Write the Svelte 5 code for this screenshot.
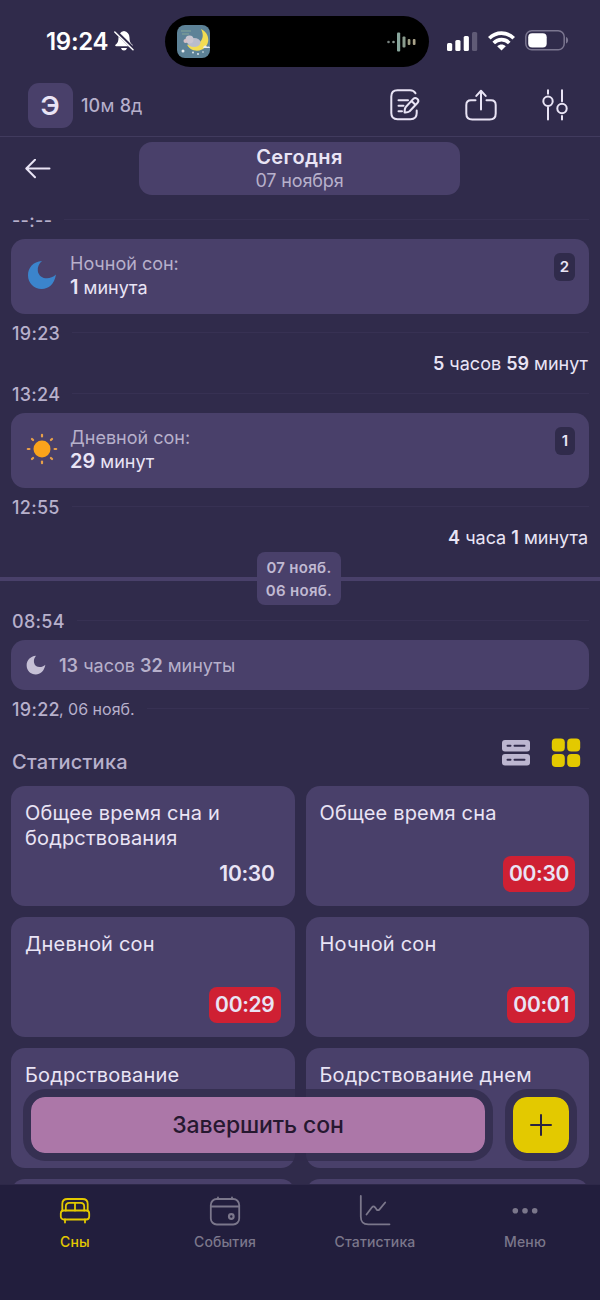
<script lang="ts">
	type Part = { text: string; bold?: boolean };

	const nightSleep: Part[] = [{ text: "1", bold: true }, { text: " минута" }];
	const daySleep: Part[] = [{ text: "29", bold: true }, { text: " минут" }];
	const firstGap: Part[] = [
		{ text: "5", bold: true },
		{ text: " часов " },
		{ text: "59", bold: true },
		{ text: " минут" }
	];
	const secondGap: Part[] = [
		{ text: "4", bold: true },
		{ text: " часа " },
		{ text: "1", bold: true },
		{ text: " минута" }
	];
	const previousNight: Part[] = [
		{ text: "13", bold: true },
		{ text: " часов " },
		{ text: "32", bold: true },
		{ text: " минуты" }
	];

	const stats = [
		{ title: "Общее время сна и бодрствования", value: "10:30", alert: false },
		{ title: "Общее время сна", value: "00:30", alert: true },
		{ title: "Дневной сон", value: "00:29", alert: true },
		{ title: "Ночной сон", value: "00:01", alert: true },
		{ title: "Бодрствование", value: "", alert: false },
		{ title: "Бодрствование днем", value: "", alert: false },
		{ title: "", value: "", alert: false },
		{ title: "", value: "", alert: false }
	];

	const tabs = [
		{ id: "sleep", label: "Сны" },
		{ id: "events", label: "События" },
		{ id: "stats", label: "Статистика" },
		{ id: "menu", label: "Меню" }
	];

	let activeTab = $state("sleep");
</script>

{#snippet duration(parts: Part[])}
	{#each parts as part}{#if part.bold}<b>{part.text}</b>{:else}<span>{part.text}</span>{/if}{/each}
{/snippet}

{#snippet timeRow(time: string, note: string = "")}
	<div class="time-row">
		<span class="time">{time}</span>
		{#if note}<span class="note">{note}</span>{/if}
		<span class="rule"></span>
	</div>
{/snippet}

<div class="screen">
	<div class="status">
		<div class="clock">
			<span>19:24</span>
			<svg width="20" height="22" viewBox="0 0 20 22">
				<path
					d="M10 1C6.600 1.600 4.600 4 4.500 7.500c0 4-.8 5.600-3 7.300-.6.7-.2 1.500.6 1.500h15.800c.8 0 1.200-.8.6-1.500-2.200-1.700-3-3.300-3-7.300C15.400 4 13.400 1.600 10 1z"
					fill="#fff"
				/>
				<path d="M7 18h6c-.5 1.700-1.600 2.500-3 2.500S7.500 19.700 7 18z" fill="#fff" />
				<path d="M1.500 1.300 20 19.400" stroke="#302b4b" stroke-width="3.400" />
				<path d="M.8 2 19 19.800" stroke="#fff" stroke-width="1.500" stroke-linecap="round" />
			</svg>
		</div>
		<div class="island">
			<svg class="app-thumb" width="33" height="33" viewBox="0 0 33 33">
				<rect width="33" height="33" rx="8" fill="#5d8297" />
				<path d="M4 6h10M5 9h7" stroke="#83a697" stroke-width="1.200" />
				<path d="M24 4c9 4 10 16 1 20.500-6 3-13 0-15-5 7 3 14-1 15.500-7 .7-3-.2-6-1.500-8.500z" fill="#f2dc52" />
				<ellipse cx="17" cy="17.500" rx="6.500" ry="4.500" fill="#b9bccb" />
				<circle cx="12.500" cy="14.500" r="4" fill="#c9c5d0" />
				<circle cx="8.500" cy="16" r="2" fill="#d6bfc5" />
				<path d="M26 23c1-3 3-3 4-1 1.500-1 3 0 3 1z" fill="#e6ebf0" />
				<g fill="#e8eef2">
					<circle cx="6" cy="26" r="1.500" />
					<circle cx="16" cy="27.500" r=".9" />
					<circle cx="21" cy="29" r=".9" />
					<circle cx="26" cy="27" r=".8" />
				</g>
			</svg>
			<svg width="30" height="22" viewBox="0 0 30 22">
				<circle cx="2.500" cy="11" r="1.300" fill="#77827f" />
				<circle cx="7.500" cy="11" r="1.300" fill="#8b9691" />
				<rect x="11" y="1.500" width="3.200" height="19" rx="1" fill="#88a69c" />
				<rect x="16.500" y="5.500" width="3" height="11" rx="1" fill="#8a9c8e" />
				<rect x="21.700" y="8" width="2.700" height="6" rx="1" fill="#9c9d82" />
				<rect x="26.800" y="8" width="2.700" height="6" rx="1" fill="#aaa38a" />
			</svg>
		</div>
		<div class="signals">
			<svg width="31" height="20" viewBox="0 0 31 20">
				<rect y="12" width="5.200" height="8" rx="1.500" fill="#fff" />
				<rect x="8.300" y="9" width="5.200" height="11" rx="1.500" fill="#fff" />
				<rect x="16.700" y="5" width="5.200" height="15" rx="1.500" fill="#fff" />
				<rect x="25" y="1" width="5.200" height="19" rx="1.500" fill="#605b76" />
			</svg>
			<svg width="27" height="20" viewBox="0 0 27 20">
				<g fill="none" stroke="#fff" stroke-width="3.700">
					<path d="M1.300 7.300c7-6.900 17.400-6.900 24.400 0" />
					<path d="M5.700 12c4.500-4.400 11.100-4.400 15.600 0" />
				</g>
				<path d="M13.500 19.500 9.200 15.300c2.500-2.300 6.100-2.300 8.600 0z" fill="#fff" />
			</svg>
			<svg width="44" height="21" viewBox="0 0 44 21">
				<rect x=".8" y=".8" width="38.400" height="19" rx="6" fill="none" stroke="#7b7690" stroke-width="1.500" />
				<rect x="3.200" y="3.200" width="18.500" height="14.200" rx="4" fill="#fff" />
				<path d="M41 7c2.800 1 2.800 5.600 0 6.600z" fill="#7b7690" />
			</svg>
		</div>
	</div>

	<header>
		<div class="avatar">Э</div>
		<div class="age"><b>10</b>м <b>8</b>д</div>
		<div class="actions">
			<button aria-label="Заметка">
				<svg width="30" height="32" viewBox="0 0 30 32">
					<path d="M25.500 4.300C24.300 2.200 22.500 1.300 20 1.300H7.500C3.200 1.300 1.300 3.200 1.300 7.500v16.500c0 4.300 1.900 6.200 6.200 6.200H20.500c4.300 0 6.200-2 6.200-6.200V21.500" />
					<path d="M8.500 11.300h9.500M8.500 16.800h5M8.500 22.300h3.500" />
					<path d="M15.800 18 23.300 9.900c2.300-2.400 6.600 1 4.300 3.800L19.600 22.200c-1.300 1-3 1.400-5 1.200 0-1.700 0-4.200 1.200-5.400zM21.800 12.200l3.300 3.300" />
				</svg>
			</button>
			<button aria-label="Поделиться">
				<svg width="32" height="32" viewBox="0 0 32 32">
					<path d="M10.500 11.300H6c-3.200 0-4.700 1.500-4.700 4.700v8.500c0 4.200 1.800 6 6 6h17.400c4.200 0 6-1.800 6-6V16c0-3.200-1.500-4.700-4.700-4.700h-4.500" />
					<path d="M16 20.500V2M11.300 6.900 16 1.800l4.700 5.100" />
				</svg>
			</button>
			<button aria-label="Настройки">
				<svg width="26" height="32" viewBox="0 0 26 32">
					<path d="M6 1.300v3.500M6 18.500v12M20 1.300v11M20 27v3.500" />
					<circle cx="6" cy="12.300" r="4.700" />
					<circle cx="20" cy="19.500" r="4.700" />
				</svg>
			</button>
		</div>
	</header>

	<div class="date-row">
		<button class="back" aria-label="Назад">
			<svg width="26" height="20" viewBox="0 0 26 20">
				<path d="M24.500 9.500H1.500M10 .8 1.300 9.500l8.700 8.800" />
			</svg>
		</button>
		<div class="date">
			<strong>Сегодня</strong>
			<span>07 ноября</span>
		</div>
	</div>

	<main>
		{@render timeRow("--:--")}
		<div class="card">
			<svg class="big-icon" width="32" height="32" viewBox="0 0 32 32">
				<path
					d="M16 2C7 2.500 2 9 2 16.300c0 8 6 13.700 13.700 13.700 7 0 12.500-4.500 14.300-14.400-7 6.400-17 4-18.200-3.700C11.300 8 13 4.500 16 2z"
					fill="#3b84cc"
				/>
			</svg>
			<div class="card-text">
				<span class="kind">Ночной сон:</span>
				<div class="duration">{@render duration(nightSleep)}</div>
			</div>
			<span class="count">2</span>
		</div>
		{@render timeRow("19:23")}
		<div class="gap">{@render duration(firstGap)}</div>
		{@render timeRow("13:24")}
		<div class="card">
			<svg class="big-icon" width="32" height="32" viewBox="0 0 32 32">
				<circle cx="16" cy="16" r="8.500" fill="#faa31b" />
				{#each [0, 45, 90, 135, 180, 225, 270, 315] as angle}
					<path
						d="M16 1.800v1.600"
						transform="rotate({angle} 16 16)"
						stroke="#e8a04a"
						stroke-width="2.200"
						stroke-linecap="round"
					/>
				{/each}
			</svg>
			<div class="card-text">
				<span class="kind">Дневной сон:</span>
				<div class="duration">{@render duration(daySleep)}</div>
			</div>
			<span class="count">1</span>
		</div>
		{@render timeRow("12:55")}
		<div class="gap">{@render duration(secondGap)}</div>
		<div class="day-divider">
			<span class="line"></span>
			<div class="days">
				<span>07 нояб.</span>
				<span>06 нояб.</span>
			</div>
			<span class="line"></span>
		</div>
		{@render timeRow("08:54")}
		<div class="card small">
			<svg width="20" height="20" viewBox="0 0 32 32">
				<path
					d="M16 1C7 1.500 1 8.500 1 16.300 1 25 7.500 31 15.700 31 23 31 29 26 31 15.600c-7 6.400-17 4-18.200-3.700C12.300 8 13 4.500 16 1z"
					fill="#c6c0d6"
				/>
			</svg>
			<div class="duration">{@render duration(previousNight)}</div>
		</div>
		{@render timeRow("19:22", ", 06 нояб.")}

		<div class="stats-head">
			<h2>Статистика</h2>
			<svg width="30" height="30" viewBox="0 0 30 30">
				<rect x="1" y="2" width="28" height="11.500" rx="3" fill="#bcb6d0" />
				<rect x="1" y="16" width="28" height="11.500" rx="3" fill="#bcb6d0" />
				<path d="M6.500 7.700h3M13.500 7.700h10M6.500 21.700h3M13.500 21.700h10" stroke="#302b4b" stroke-width="2" stroke-linecap="round" />
			</svg>
			<svg width="30" height="30" viewBox="0 0 30 30" fill="#e3c900">
				<rect x=".8" y=".5" width="13" height="13" rx="4" />
				<rect x="16.200" y=".5" width="13" height="13" rx="4" />
				<rect x=".8" y="15.900" width="13" height="13" rx="4" />
				<rect x="16.200" y="15.900" width="13" height="13" rx="4" />
			</svg>
		</div>
		<div class="grid">
			{#each stats as stat}
				<div class="stat">
					<span class="title">{stat.title}</span>
					{#if stat.value}
						<span class="value" class:alert={stat.alert}>{stat.value}</span>
					{/if}
				</div>
			{/each}
		</div>
	</main>

	<div class="floating">
		<button class="finish">Завершить сон</button>
		<button class="add" aria-label="Добавить">
			<svg width="22" height="22" viewBox="0 0 22 22">
				<path d="M11 1v20M1 11h20" stroke="#2b2340" stroke-width="2" stroke-linecap="round" />
			</svg>
		</button>
	</div>

	<nav>
		{#each tabs as tab}
			<button class="tab" class:active={activeTab === tab.id} onclick={() => (activeTab = tab.id)}>
				<svg width="32" height="32" viewBox="0 0 32 32">
					{#if tab.id === "sleep"}
						<path d="M3.300 15.500V9C3.300 5.500 5 4 8.500 4h15c3.500 0 5.200 1.500 5.200 5v6.500" />
						<path d="M6.800 15.500v-4c0-2.500 1-3.700 3.500-3.700h11.400c2.500 0 3.500 1.200 3.500 3.700v4M16 8v7.500" />
						<rect x="1.800" y="15.500" width="28.400" height="9" rx="3" />
						<path d="M6 24.500v3M26 24.500v3" />
					{:else if tab.id === "events"}
						<rect x="1.800" y="4" width="28.400" height="25.500" rx="6" />
						<path d="M2 11.500h28M9 2.500V4M23 2.500V4" />
						<circle cx="22.300" cy="21.500" r="2.300" stroke-width="2.200" />
					{:else if tab.id === "stats"}
						<path d="M1.800 1v20.500c0 5.500 2 7.800 7.500 7.800h21.200" />
						<path d="m7.500 19.500 5.500-7.200c1-1.200 2-1.200 3 0l1.500 2c1 1.200 2 1.200 3 0l5.700-6.800" />
					{:else}
						<g fill="currentColor" stroke="none">
							<circle cx="6.300" cy="15.800" r="2.800" />
							<circle cx="16" cy="15.800" r="2.800" />
							<circle cx="25.700" cy="15.800" r="2.800" />
						</g>
					{/if}
				</svg>
				<span>{tab.label}</span>
			</button>
		{/each}
	</nav>
</div>

<style>
	:global(body) {
		margin: 0;
		background: #302b4b;
	}

	.screen {
		--bg: #302b4b;
		--card: #49406a;
		--text: #e9e4f5;
		--muted: #b7b0cb;
		position: relative;
		display: flex;
		flex-direction: column;
		width: 600px;
		height: 1300px;
		overflow: hidden;
		background: var(--bg);
		color: var(--text);
		font-family: Inter, "Liberation Sans", sans-serif;
	}

	button {
		padding: 0;
		border: 0;
		background: none;
		color: inherit;
		font: inherit;
	}

	svg {
		display: block;
		flex: none;
	}

	b {
		font-weight: 600;
	}

	/* status bar */
	.status {
		display: flex;
		box-sizing: border-box;
		height: 75px;
		padding: 16px 31px 0 46px;
	}

	.clock {
		display: flex;
		align-items: center;
		gap: 6px;
		width: 119px;
		height: 50px;
		color: #fff;
		font-size: 24px;
		font-weight: 600;
		letter-spacing: -0.3px;
	}

	.island {
		display: flex;
		align-items: center;
		justify-content: space-between;
		box-sizing: border-box;
		width: 264px;
		height: 51px;
		padding: 0 13px 0 12px;
		border-radius: 26px;
		background: #000;
	}

	.signals {
		display: flex;
		align-items: center;
		gap: 10px;
		height: 49px;
		margin-left: 18px;
	}

	/* header */
	header {
		display: flex;
		align-items: center;
		box-sizing: border-box;
		height: 62px;
		padding: 0 32px 0 28px;
		border-bottom: 1px solid #413b5e;
	}

	.avatar {
		width: 45px;
		height: 45px;
		border-radius: 11px;
		background: var(--card);
		font-size: 26px;
		font-weight: 600;
		line-height: 45px;
		text-align: center;
		text-indent: -1px;
	}

	.age {
		margin-left: 8px;
		color: var(--muted);
		font-size: 18px;
		letter-spacing: 0.15px;
	}

	.age b {
		font-weight: 500;
	}

	.actions {
		display: flex;
		gap: 45px;
		margin-left: auto;
	}

	.actions svg,
	.back svg {
		fill: none;
		stroke: var(--text);
		stroke-width: 2;
		stroke-linecap: round;
		stroke-linejoin: round;
	}

	.actions svg {
		margin-top: -1px;
	}

	.date-row {
		display: flex;
		align-items: center;
		height: 63px;
	}

	.back {
		width: 139px;
		padding-left: 25px;
	}

	.date {
		display: flex;
		flex-direction: column;
		align-items: center;
		justify-content: center;
		width: 321px;
		height: 53px;
		border-radius: 13px;
		background: var(--card);
	}

	.date strong {
		font-size: 20px;
		font-weight: 600;
		letter-spacing: 0.35px;
		line-height: 23px;
	}

	.date span {
		color: var(--muted);
		font-size: 18px;
		letter-spacing: -0.15px;
		line-height: 23px;
	}

	/* timeline */
	main {
		flex: 1;
		min-height: 0;
		padding: 1px 11px 0;
		overflow: hidden;
	}

	.time-row {
		display: flex;
		align-items: center;
		height: 38px;
		padding-left: 1px;
		color: var(--muted);
	}

	.time {
		font-size: 18px;
		font-weight: 500;
		letter-spacing: 0.3px;
	}

	.note {
		margin-left: -1px;
		font-size: 16px;
	}

	.rule {
		flex: 1;
		height: 1px;
		margin: -1px 0 0 12px;
		background: #373153;
	}

	.card {
		display: flex;
		box-sizing: border-box;
		height: 75px;
		padding: 14px;
		border-radius: 14px;
		background: var(--card);
	}

	.big-icon {
		margin: 6px 0 0 1px;
	}

	.card-text {
		flex: 1;
		margin-left: 12px;
	}

	.kind {
		display: block;
		color: var(--muted);
		font-size: 18px;
		line-height: 22px;
	}

	.duration {
		font-size: 18px;
		line-height: 25px;
		white-space: pre;
	}

	.card-text b {
		font-size: 20px;
	}

	.count {
		box-sizing: border-box;
		min-width: 20px;
		height: 28px;
		padding: 0 6px;
		border-radius: 6px;
		background: var(--bg);
		font-size: 15px;
		font-weight: 600;
		line-height: 27px;
		text-align: center;
	}

	.gap {
		height: 23px;
		padding-right: 1px;
		font-size: 18px;
		line-height: 23px;
		text-align: right;
		white-space: pre;
	}

	.day-divider {
		display: flex;
		align-items: center;
		margin: 3px -11px -3px;
	}

	.line {
		flex: 1;
		height: 4px;
		background: var(--card);
	}

	.line:last-child {
		flex: none;
		width: 259px;
	}

	.days {
		display: flex;
		flex-direction: column;
		align-items: center;
		justify-content: center;
		width: 84px;
		height: 53px;
		border-radius: 8px;
		background: var(--card);
		color: #c0b9d2;
		font-size: 15px;
		font-weight: 600;
		letter-spacing: 0.3px;
		line-height: 23px;
	}

	.card.small {
		align-items: center;
		gap: 13px;
		height: 50px;
		padding: 0 15px;
		color: var(--muted);
	}

	/* statistics */
	.stats-head {
		display: flex;
		gap: 20px;
		height: 48px;
		padding: 10px 8px 0 1px;
	}

	h2 {
		flex: 1;
		margin: 0;
		color: var(--muted);
		font-size: 20px;
		font-weight: 500;
		letter-spacing: 0.25px;
		line-height: 48px;
	}

	.grid {
		display: grid;
		grid-template-columns: 1fr 1fr;
		gap: 11px;
	}

	.stat {
		display: flex;
		flex-direction: column;
		justify-content: space-between;
		box-sizing: border-box;
		height: 120px;
		padding: 15px 14px 14px;
		border-radius: 14px;
		background: var(--card);
	}

	.title {
		font-size: 20px;
		letter-spacing: 0.18px;
		line-height: 25px;
	}

	.value {
		align-self: flex-end;
		height: 36px;
		padding: 0 6px;
		border-radius: 8px;
		font-size: 21px;
		font-weight: 600;
		letter-spacing: -0.3px;
		line-height: 36px;
	}

	.alert {
		background: #cf2033;
	}

	/* buttons over the scrolled list */
	.floating {
		position: absolute;
		right: 23px;
		bottom: 139px;
		left: 23px;
		display: flex;
		justify-content: space-between;
	}

	.floating button {
		display: flex;
		align-items: center;
		justify-content: center;
		box-sizing: border-box;
		height: 72px;
		border: 8px solid rgba(48, 43, 75, 0.75);
		border-radius: 22px;
		background-clip: padding-box;
	}

	.floating .finish {
		width: 470px;
		background-color: #ac77a8;
		color: #261830;
		font-size: 23px;
		font-weight: 500;
		letter-spacing: -0.1px;
	}

	.floating .add {
		width: 72px;
		background-color: #e3c900;
	}

	/* tab bar */
	nav {
		display: flex;
		box-sizing: border-box;
		height: 116px;
		padding-top: 10px;
		border-top: 1px solid #2d2848;
		background: #221e3d;
	}

	.tab {
		display: flex;
		flex: 1;
		flex-direction: column;
		align-items: center;
		gap: 6px;
		color: #7b778b;
		font-size: 14px;
		font-weight: 500;
		letter-spacing: 0.15px;
		line-height: 18px;
	}

	.tab svg {
		fill: none;
		stroke: currentColor;
		stroke-width: 1.8;
		stroke-linecap: round;
		stroke-linejoin: round;
	}

	.active {
		color: #e3c900;
	}
</style>
